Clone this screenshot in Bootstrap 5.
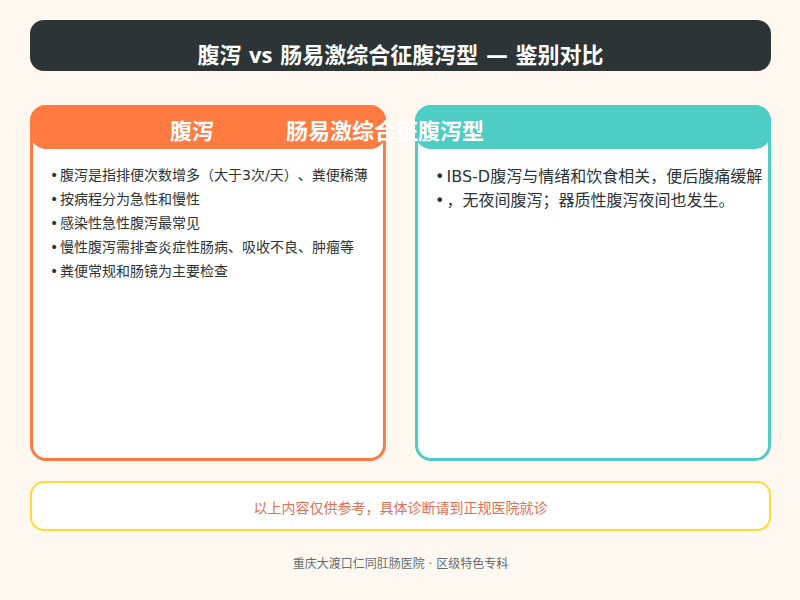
<!DOCTYPE html>
<html lang="zh-CN">

<head>
    <meta charset="UTF-8" />
    <title>腹泻 vs 肠易激综合征腹泻型</title>
    <link href="https://cdn.jsdelivr.net/npm/bootstrap@5.3.2/dist/css/bootstrap.min.css" rel="stylesheet" />
    <style>
        body {
            background: #fff8f0;
            color: #2d3436;
            font-family: "DejaVu Sans", "Noto Sans CJK SC", sans-serif;
            text-spacing-trim: space-all;
            height: 600px;
            overflow: hidden;
        }

        .page {
            padding: 20px 29px 0 30px;
        }

        .title-bar {
            background: #2d3436;
            border-radius: 14px;
            height: 51px;
            padding-top: 19px;
            font-size: 22px;
            line-height: 30px;
            font-weight: 700;
        }

        .title-latin {
            font-family: "Open Sans", sans-serif;
        }

        .compare {
            margin-top: 34px;
            gap: 29px;
        }

        .side {
            width: 356px;
            height: 356px;
            background: #fff;
            border: 3px solid;
            border-radius: 16px;
        }

        .side-orange {
            border-color: #ff7b42;
        }

        .side-teal {
            border-color: #4ecdc4;
        }

        .side-head {
            height: 44px;
            margin: -3px -3px 0;
            border-radius: 16px;
            font-size: 22px;
            line-height: 53px;
            font-weight: 700;
            white-space: nowrap;
        }

        .side-orange .side-head {
            background: #ff7b42;
            padding-left: 140px;
        }

        .side-teal .side-head {
            background: #4ecdc4;
        }

        .head-gap {
            margin-left: 72px;
        }

        .points {
            list-style: none;
            margin: 0;
            padding: 14px 0 0 17px;
            font-size: 14px;
            line-height: 24px;
        }

        .points li::before {
            content: "•";
            display: inline-block;
            width: .72em;
        }

        .side-teal .points {
            padding-top: 16px;
            font-size: 16px;
        }

        .notice {
            margin-top: 20px;
            height: 50px;
            background: #fff;
            border: 2px solid #ffd93d;
            border-radius: 14px;
            color: #e17055;
            font-size: 14px;
            line-height: 50px;
        }

        .foot {
            margin-top: 23px;
            color: #636e72;
            font-size: 12px;
            line-height: 20px;
        }
    </style>
</head>

<body>
    <div class="page">
        <div class="title-bar text-white text-center">腹泻 <span class="title-latin">vs</span> 肠易激综合征腹泻型 — 鉴别对比</div>

        <div class="compare d-flex">
            <div class="side side-orange">
                <div class="side-head text-white">腹泻<span class="head-gap position-relative z-1">肠易激综合征腹泻型</span></div>
                <ul class="points">
                    <li>腹泻是指排便次数增多（大于3次/天）、粪便稀薄</li>
                    <li>按病程分为急性和慢性</li>
                    <li>感染性急性腹泻最常见</li>
                    <li>慢性腹泻需排查炎症性肠病、吸收不良、肿瘤等</li>
                    <li>粪便常规和肠镜为主要检查</li>
                </ul>
            </div>
            <div class="side side-teal">
                <div class="side-head text-white"></div>
                <ul class="points">
                    <li>IBS-D腹泻与情绪和饮食相关，便后腹痛缓解</li>
                    <li>，无夜间腹泻；器质性腹泻夜间也发生。</li>
                </ul>
            </div>
        </div>

        <div class="notice text-center">以上内容仅供参考，具体诊断请到正规医院就诊</div>
        <div class="foot text-center">重庆大渡口仁同肛肠医院 · 区级特色专科</div>
    </div>

    <script src="https://cdn.jsdelivr.net/npm/bootstrap@5.3.2/dist/js/bootstrap.bundle.min.js"></script>
</body>

</html>
